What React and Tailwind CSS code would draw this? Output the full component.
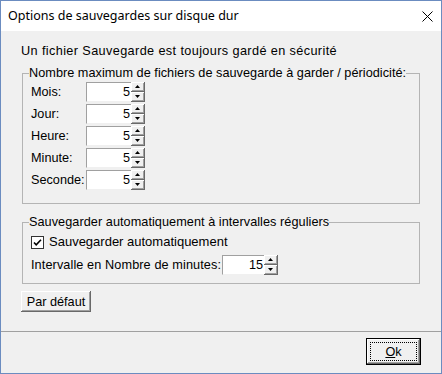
import React from 'react';

const font = { fontFamily: '"Liberation Sans", Arial, sans-serif' };

function SpinBox({ value, width = 'w-[45px]' }) {
  return (
    <div className="flex h-[20px]">
      <div
        className={`${width} h-full bg-white border border-t-[#a0a0a0] border-l-[#a0a0a0] border-b-[#f0f0f0] border-r-0 flex items-center justify-end pr-[1px] text-black`}
      >
        {value}
      </div>
      <div className="flex flex-col w-[14px] h-full">
        <SpinButton up />
        <SpinButton />
      </div>
    </div>
  );
}

function SpinButton({ up }) {
  return (
    <div className="flex-1 bg-[#f0f0f0] flex items-center justify-center shadow-[inset_-1px_-1px_0_#696969,inset_1px_1px_0_#ffffff,inset_-2px_-2px_0_#a0a0a0]">
      <svg width="5" height="3" viewBox="0 0 5 3" className="-mt-[1px] -ml-[1px]">
        {up ? (
          <path d="M2.5 0 L5 3 L0 3 Z" fill="#000" />
        ) : (
          <path d="M0 0 L5 0 L2.5 3 Z" fill="#000" />
        )}
      </svg>
    </div>
  );
}

function Row({ label, value }) {
  return (
    <div className="flex items-center h-[20px]">
      <span className="w-[55px]">{label}</span>
      <SpinBox value={value} />
    </div>
  );
}

export default function App() {
  return (
    <div
      className="w-[442px] h-[374px] border border-[#6b8cc0] bg-white flex flex-col text-[12.7px] leading-[14px] text-black"
      style={font}
    >
      {/* Title bar */}
      <div className="h-[30px] flex items-center justify-between pl-[7px] pr-[8px] bg-white">
        <span className="text-[12.5px]" style={{ fontFamily: '"Noto Sans", "Liberation Sans", sans-serif' }}>
          Options de sauvegardes sur disque dur
        </span>
        <svg width="11" height="11" viewBox="0 0 11 11">
          <path d="M0.5 0.5 L10.5 10.5 M10.5 0.5 L0.5 10.5" stroke="#000" strokeWidth="1" />
        </svg>
      </div>

      {/* Body */}
      <div className="flex-1 bg-[#f0f0f0] flex flex-col">
        <div className="flex-1 flex flex-col pl-[20px] pt-[13px]">
          <p className="tracking-[0.38px]">Un fichier Sauvegarde est toujours gardé en sécurité</p>

          <fieldset className="mt-[8px] ml-[1px] w-[398px] border border-[#b4b4b4] p-0">
            <legend className="ml-[6px] px-0 tracking-[0.03px]">
              Nombre maximum de fichiers de sauvegarde à garder / périodicité:
            </legend>
            <div className="flex flex-col gap-[2px] pl-[8px] pt-[2px] pb-[13px]">
              <Row label="Mois:" value="5" />
              <Row label="Jour:" value="5" />
              <Row label="Heure:" value="5" />
              <Row label="Minute:" value="5" />
              <Row label="Seconde:" value="5" />
            </div>
          </fieldset>

          <fieldset className="mt-[11px] ml-[1px] w-[398px] border border-[#b4b4b4] p-0">
            <legend className="ml-[6px] px-0 tracking-[0.05px]">
              Sauvegarder automatiquement à intervalles réguliers
            </legend>
            <div className="pl-[8px] pt-[6px] pb-[8px]">
              <div className="flex items-center gap-[5px] h-[14px]">
                <svg width="13" height="13" viewBox="0 0 13 13">
                  <rect x="0.5" y="0.5" width="12" height="12" fill="#fff" stroke="#333" />
                  <path d="M3 6.5 L5.2 8.8 L10 3.8" fill="none" stroke="#000" strokeWidth="1.6" />
                </svg>
                <span className="text-[13px]">Sauvegarder automatiquement</span>
              </div>
              <div className="flex items-center mt-[6px] h-[20px]">
                <span className="w-[191px] tracking-[0.1px]">Intervalle en Nombre de minutes:</span>
                <SpinBox value="15" width="w-[42px]" />
              </div>
            </div>
          </fieldset>

          <div className="mt-[7px]">
            <button className="w-[70px] h-[21px] bg-[#f0f0f0] shadow-[inset_-1px_-1px_0_#696969,inset_1px_1px_0_#ffffff,inset_-2px_-2px_0_#a0a0a0]">
              Par défaut
            </button>
          </div>
        </div>

        {/* Footer */}
        <div className="border-t border-[#a0a0a0] flex justify-end pr-[20px] pt-[6px] pb-[8px]">
          <button className="w-[55px] h-[27px] bg-[#f0f0f0] border border-black shadow-[inset_-1px_-1px_0_#696969,inset_1px_1px_0_#ffffff,inset_-2px_-2px_0_#a0a0a0] flex items-center justify-center p-[3px]">
            <span className="w-full h-full border border-dotted border-black flex items-center justify-center">
              <span>
                <span className="underline">O</span>k
              </span>
            </span>
          </button>
        </div>
      </div>
    </div>
  );
}
